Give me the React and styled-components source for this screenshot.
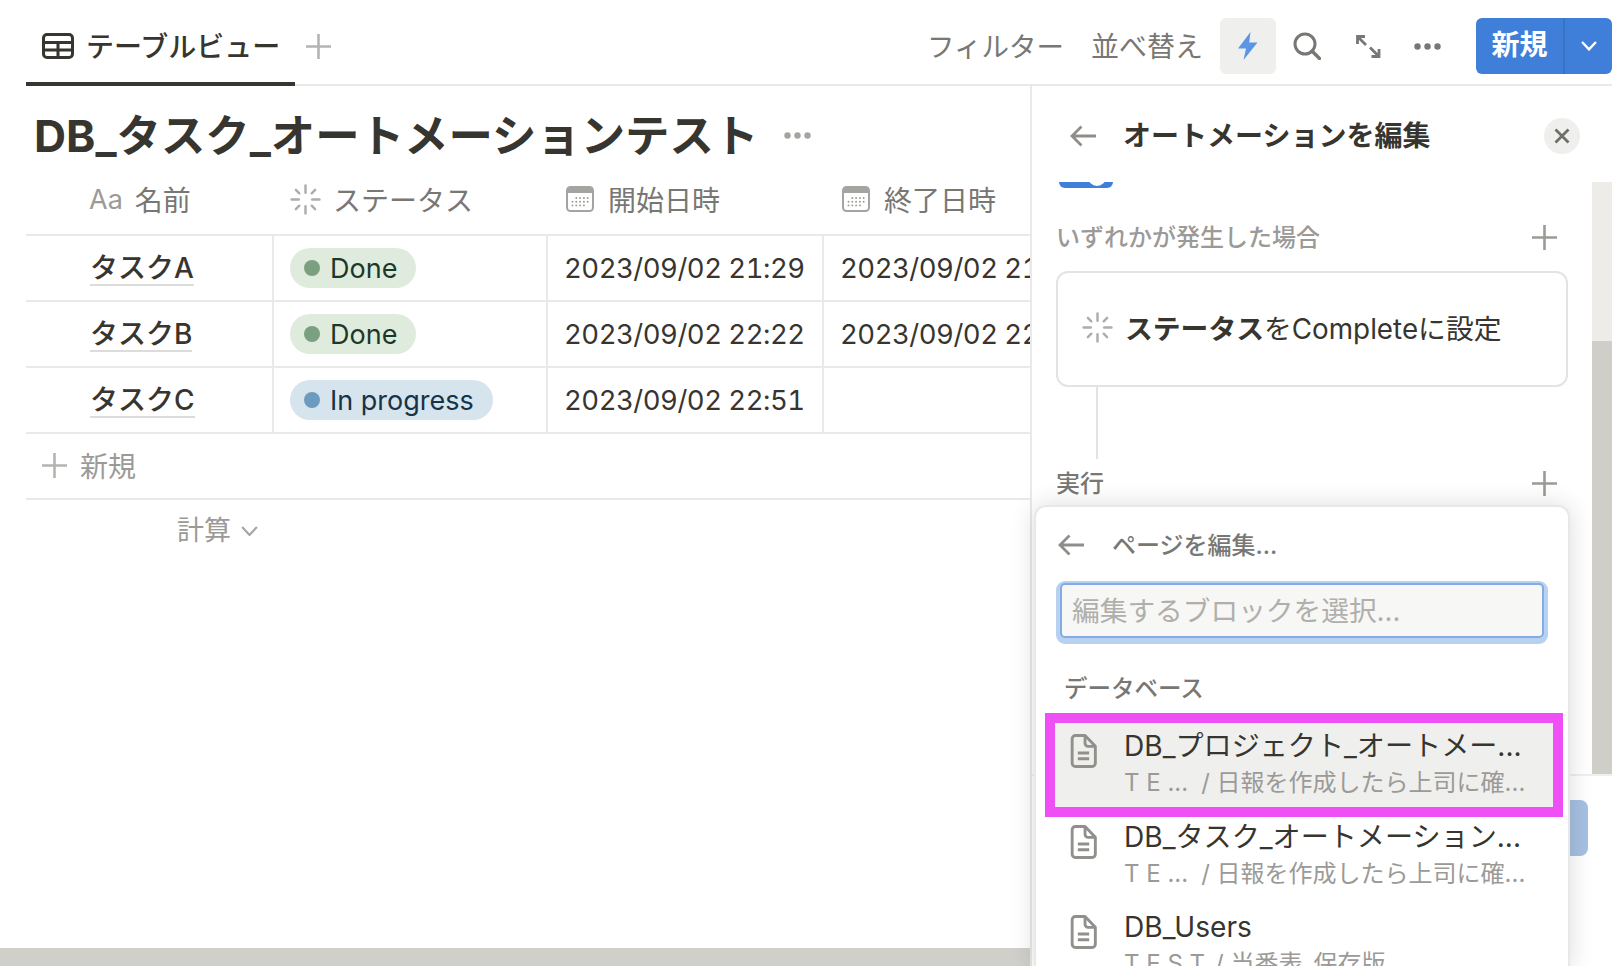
import React from "react";
import styled, { createGlobalStyle } from "styled-components";

const Global = createGlobalStyle`
  html, body { margin: 0; padding: 0; background: #fff; }
  body { font-family: Inter, "Noto Sans CJK JP", sans-serif; color: #37352f; font-size: 28px; }
  * { box-sizing: border-box; }
`;

const Page = styled.div`
  width: 1622px; height: 966px; overflow: hidden; display: flex; flex-direction: column; background: #fff;
`;
const TopBar = styled.header`
  height: 86px; margin: 0 10px 0 26px; border-bottom: 2px solid #e9e9e7;
  display: flex; justify-content: space-between; flex: none;
`;
const TabGroup = styled.div`display: flex; align-items: flex-start;`;
const Tab = styled.div`
  width: 269px; height: 86px; border-bottom: 4px solid #37352f; padding: 33px 0 0 16px;
  display: flex; align-items: flex-start; gap: 12px; font-size: 28px; line-height: 28px; font-weight: 500;
`;
const TabLabel = styled.span`letter-spacing: 0;`;
const TabAdd = styled.div`margin: 34px 0 0 11px; display: flex;`;
const Actions = styled.div`display: flex; align-items: flex-start; padding-top: 18px;`;
const ActionText = styled.div`
  height: 56px; line-height: 58px; font-size: ${p => p.$size}px; color: #787774; margin-right: ${p => p.$gap}px;
`;
const ActiveIcon = styled.div`
  width: 56px; height: 56px; border-radius: 6px; background: #efefee; display: flex; align-items: center; justify-content: center;
`;
const IconSlot = styled.div`
  height: 56px; display: flex; align-items: center; margin-left: ${p => p.$left}px;
`;
const NewButton = styled.div`
  margin-left: 35px; width: 136px; height: 56px; border-radius: 6px; background: #3f7fd9; color: #fff;
  display: flex; align-items: stretch;
`;
const NewLabel = styled.div`
  width: 89px; text-align: center; font-size: 28px; font-weight: 600; line-height: 55px; border-right: 2px solid #3873c6;
`;
const NewCaret = styled.div`flex: 1; display: flex; align-items: center; justify-content: center;`;

const Body = styled.div`flex: 1; display: flex; min-height: 0;`;
const Main = styled.main`width: 1030px; flex: none; display: flex; flex-direction: column; overflow: hidden;`;
const MainScroll = styled.div`flex: 1; padding-left: 26px; overflow: hidden;`;
const HScroll = styled.div`height: 18px; background: #d0cfca; flex: none;`;
const TitleRow = styled.div`
  height: 80px; padding: 20px 0 0 8px; display: flex; align-items: flex-start; gap: 26px;
`;
const Title = styled.h1`
  margin: 0; font-size: 44.4px; line-height: 60px; font-weight: 700; white-space: nowrap; color: #37352f;
`;
const TitleDots = styled.div`height: 60px; display: flex; align-items: center; margin-top: -1px;`;
const Row = styled.div`
  display: grid; grid-template-columns: 248px 274px 276px 207px; height: ${p => p.$h || 66}px; border-bottom: 2px solid #e9e9e7;
`;
const HeadCell = styled.div`
  display: flex; align-items: center; gap: ${p => p.$gap || 14}px; padding-left: ${p => p.$pad}px; color: #787774; font-size: 28px; white-space: nowrap; overflow: hidden; padding-bottom: 2px;
`;
const AaMark = styled.span`color: #9b9a97; font-size: 27px;`;
const NameCell = styled.div`
  border-right: 2px solid #e9e9e7; padding: 15px 0 0 64px; font-size: 28px; font-weight: 500;
`;
const NameLink = styled.span`
  display: inline-block; line-height: 31px; border-bottom: 2px solid #dcdcda;
`;
const Cell = styled.div`
  border-right: ${p => (p.$last ? "none" : "2px solid #e9e9e7")}; padding-left: ${p => p.$pad || 16}px;
  display: flex; align-items: center; overflow: hidden; white-space: nowrap; font-size: 27.5px;
  font-variant-numeric: tabular-nums; letter-spacing: -0.5px;
`;
const Pill = styled.div`
  height: 40px; border-radius: 20px; padding: 0 19px 0 14px; display: inline-flex; align-items: center; gap: 10px;
  background: ${p => p.$bg}; color: ${p => p.$fg}; font-size: 27px; letter-spacing: 0; font-variant-numeric: normal;
`;
const Dot = styled.i`width: 16px; height: 16px; border-radius: 50%; background: ${p => p.$c}; display: block;`;
const AddRow = styled.div`
  height: 66px; border-bottom: 2px solid #e9e9e7; display: flex; align-items: center; gap: 13px; padding: 0 0 2px 16px; color: #9b9a97; font-size: 28px;
`;
const CalcRow = styled.div`
  display: flex; align-items: center; gap: 10px; padding: 13px 0 0 151px; color: #9b9a97; font-size: 27px; line-height: 36px;
`;

const Panel = styled.aside`
  flex: none; width: 582px; border-left: 2px solid #e9e9e7; position: relative; display: flex; flex-direction: column;
`;
const PanelHead = styled.div`
  height: 96px; flex: none; display: flex; align-items: flex-start; padding: 33px 0 0 38px;
`;
const PanelTitle = styled.div`
  font-size: 28px; font-weight: 700; line-height: 34px; margin-left: 27px; white-space: nowrap; flex: 1;
`;
const BackWrap = styled.div`height: 34px; display: flex; align-items: center;`;
const CloseBtn = styled.div`
  width: 36px; height: 36px; border-radius: 50%; background: #efefee; display: flex; align-items: center; justify-content: center; margin: -1px 32px 0 0;
`;
const PanelMiddle = styled.div`flex: 1; display: flex; min-height: 0;`;
const PanelScroll = styled.div`flex: 1; overflow: hidden; padding: 0 24px 0 24px;`;
const Toggle = styled.div`
  width: 54px; height: 6px; margin-left: 3px; background: #3f7fd9; border-radius: 0 0 27px 27px; position: relative; overflow: hidden;
`;
const ToggleKnob = styled.i`
  position: absolute; right: 7px; top: -14px; width: 18px; height: 18px; border-radius: 50%; background: #fff; display: block;
`;
const SectionHead = styled.div`
  display: flex; align-items: center; justify-content: space-between; padding-right: 11px; height: 36px; margin-top: ${p => p.$top}px; font-size: 24px; font-weight: 500; color: ${p => p.$c};
`;
const SectionLabel = styled.span`padding-bottom: 4px;`;
const TriggerCard = styled.div`
  margin-top: 16px; height: 116px; border: 2px solid #e3e3e1; border-radius: 12px; display: flex; align-items: center; gap: 12px; padding: 0 0 4px 24px; font-size: 27.8px; white-space: nowrap;
`;
const Strong = styled.b`font-weight: 700;`;
const Connector = styled.div`width: 2px; height: 72px; background: #e3e3e1; margin-left: 40px;`;
const VScroll = styled.div`
  width: 20px; flex: none; background: #edece9; padding-top: 159px; display: flex;
`;
const VThumb = styled.div`flex: 1; background: #cfcec9;`;
const Footer = styled.div`
  height: 192px; flex: none; border-top: 2px solid #efefee; padding: 24px 24px 0 0; display: flex; justify-content: flex-end;
`;
const RunButton = styled.div`width: 200px; height: 56px; border-radius: 8px; background: #a6c0e2;`;

const Popup = styled.div`
  position: absolute; left: 2px; top: 419px; width: 536px; bottom: -4px; background: #fff; border: 2px solid #e8e8e6; border-bottom: none; border-radius: 12px 12px 0 0;
  box-shadow: 0 0 24px rgba(15, 15, 15, 0.14); z-index: 2;
`;
const PopHead = styled.div`
  height: 76px; display: flex; align-items: center; gap: 28px; padding: 0 0 0 22px; color: #787774; font-size: 24px; font-weight: 500;
`;
const PopHeadLabel = styled.span`padding-bottom: 4px;`;
const SearchInput = styled.input`
  display: block; margin-left: 24px; width: 484px; height: 55px; background: #f7f7f5; border: 2px solid #83ace6; border-radius: 5px;
  box-shadow: 0 2px 0 4px #b8d1f1; padding: 0 0 0 10px; font: 400 27.7px Inter, "Noto Sans CJK JP", sans-serif; color: #37352f; outline: none;
  &::placeholder { color: #b0afac; opacity: 1; }
`;
const GroupLabel = styled.div`
  margin: 34px 0 0 28px; line-height: 34px; height: 47px; font-size: 23.5px; font-weight: 500; color: #787774;
`;
const Item = styled.div`
  position: relative; height: 90.5px; margin: 0 9px; padding: 0 0 0 25px; display: flex; gap: 27px;
  background: ${p => (p.$mark ? "#efefee" : "transparent")};
  &::after {
    content: ${p => (p.$mark ? '""' : "none")}; position: absolute; left: 0; right: -4px; top: -6px; bottom: -7px; border: 10px solid #ee50f5; pointer-events: none;
  }
`;
const ItemIcon = styled.div`padding-top: 15px; flex: none;`;
const ItemText = styled.div`min-width: 0; padding-top: 7px; white-space: nowrap;`;
const ItemTitle = styled.div`font-size: 28.1px; line-height: 40px;`;
const ItemSub = styled.div`font-size: 24px; line-height: 36px; color: #9b9a97; margin-top: -1px;`;
const Crumb = styled.span`margin-right: ${p => p.$gap}px;`;

const Plus = ({ size = 25, color = "#9b9a97" }) => (
  <svg width={size} height={size} viewBox="0 0 25 25" fill="none" stroke={color} strokeWidth="2.6">
    <path d="M12.5 0v25M0 12.5h25" />
  </svg>
);
const TableIcon = () => (
  <svg width="32" height="26" viewBox="0 0 32 26" fill="none" stroke="#37352f" strokeWidth="3">
    <rect x="1.5" y="1.5" width="29" height="23" rx="3.5" />
    <path d="M2 9.5h28M2 17h28M16 9.5v15" />
  </svg>
);
const Bolt = () => (
  <svg width="20" height="28" viewBox="0 0 20 28" fill="#5a95e6">
    <path d="M12.5 0L0 16.5h8L5.5 28 19.5 10.5h-8.3L12.5 0z" />
  </svg>
);
const SearchIcon = () => (
  <svg width="28" height="28" viewBox="0 0 28 28" fill="none" stroke="#787774" strokeWidth="3">
    <circle cx="12" cy="12" r="10" />
    <path d="M19 19l7.5 7.5" strokeLinecap="round" strokeWidth="3.4" />
  </svg>
);
const ExpandIcon = () => (
  <svg width="26" height="25" viewBox="0 0 26 25" fill="none" stroke="#787774" strokeWidth="2.8">
    <path d="M2.5 10V2.5H10M2.5 2.5l8.5 8.5M24 15v7.5h-7.5M24 22.5l-9-9" />
  </svg>
);
const Dots = ({ color = "#787774", w = 27 }) => (
  <svg width={w} height="7" viewBox="0 0 27 7" fill={color}>
    <circle cx="3.5" cy="3.5" r="3.2" /><circle cx="13.5" cy="3.5" r="3.2" /><circle cx="23.5" cy="3.5" r="3.2" />
  </svg>
);
const Caret = ({ w = 16, color = "#fff", sw = 2.4 }) => (
  <svg width={w} height={w * 0.62} viewBox="0 0 16 10" fill="none" stroke={color} strokeWidth={sw}>
    <path d="M1 1l7 7.5L15 1" />
  </svg>
);
const Spinner = ({ size = 31 }) => (
  <svg width={size} height={size} viewBox="0 0 30 30" fill="none" stroke="#aeadaa" strokeWidth="2.4" strokeLinecap="round">
    <path d="M15 1.5v7M15 21.5v7M1.5 15h7M21.5 15h7" />
    <path d="M5.7 5.7l3.3 3.3M21 21l3.3 3.3M5.7 24.3L9 21M21 9l3.3-3.3" />
  </svg>
);
const CalendarIcon = () => {
  const dots = [];
  for (let r = 0; r < 3; r++) for (let c = 0; c < 5; c++) {
    if (r === 0 && c === 0) continue;
    if (r === 2 && c === 4) continue;
    dots.push(<circle key={`${r}${c}`} cx={6.5 + c * 3.8} cy={12 + r * 3.7} r="0.95" fill="#9b9a97" />);
  }
  return (
    <svg width="28" height="26" viewBox="0 0 28 26" fill="none">
      <rect x="1" y="1" width="26" height="24" rx="3.5" fill="#fff" stroke="#a5a4a1" strokeWidth="2" />
      <path d="M1 7V4.5A3.5 3.5 0 0 1 4.5 1h19A3.5 3.5 0 0 1 27 4.5V7z" fill="#a5a4a1" />
      {dots}
    </svg>
  );
};
const ArrowLeft = () => (
  <svg width="26" height="22" viewBox="0 0 26 22" fill="none" stroke="#8f8e8b" strokeWidth="2.8">
    <path d="M26 11H2M11.5 1.5L2 11l9.5 9.5" />
  </svg>
);
const CloseIcon = () => (
  <svg width="16" height="16" viewBox="0 0 16 16" fill="none" stroke="#6f6e69" strokeWidth="2.8">
    <path d="M1.5 1.5l13 13M14.5 1.5l-13 13" />
  </svg>
);
const DocIcon = () => (
  <svg width="27" height="34" viewBox="0 0 26 33" fill="none" stroke="#91908d" strokeWidth="2.8">
    <path d="M5 1.5h9.5L24.5 12v16.5a3 3 0 0 1-3 3H5a3 3 0 0 1-3-3v-24a3 3 0 0 1 3-3z" strokeLinejoin="round" />
    <path d="M14.5 1.5V9a3 3 0 0 0 3 3h7" />
    <path d="M7.5 18.5h11M7.5 24h11" />
  </svg>
);

const tasks = [
  { name: "タスクA", status: "Done", start: "2023/09/02 21:29", end: "2023/09/02 21:40" },
  { name: "タスクB", status: "Done", start: "2023/09/02 22:22", end: "2023/09/02 22:30" },
  { name: "タスクC", status: "In progress", start: "2023/09/02 22:51", end: "" },
];
const pillStyles = {
  Done: { bg: "#dfecdd", fg: "#1c3829", dot: "#7b9f81" },
  "In progress": { bg: "#d6e4ee", fg: "#183347", dot: "#6c9bbf" },
};
const results = [
  { title: "DB_プロジェクト_オートメー...", crumb: "T E ...", path: "/ 日報を作成したら上司に確...", mark: true, gap: 13 },
  { title: "DB_タスク_オートメーション...", crumb: "T E ...", path: "/ 日報を作成したら上司に確...", gap: 13 },
  { title: "DB_Users", crumb: "T E S T", path: "/ 当番表_保存版", gap: 10 },
];

export default function App() {
  return (
    <Page>
      <Global />
      <TopBar>
        <TabGroup>
          <Tab><TableIcon /><TabLabel>テーブルビュー</TabLabel></Tab>
          <TabAdd><Plus color="#b5b4b1" /></TabAdd>
        </TabGroup>
        <Actions>
          <ActionText $size={27.5} $gap={27}>フィルター</ActionText>
          <ActionText $size={28} $gap={17}>並べ替え</ActionText>
          <ActiveIcon><Bolt /></ActiveIcon>
          <IconSlot $left={17}><SearchIcon /></IconSlot>
          <IconSlot $left={34}><ExpandIcon /></IconSlot>
          <IconSlot $left={33}><Dots /></IconSlot>
          <NewButton>
            <NewLabel>新規</NewLabel>
            <NewCaret><Caret /></NewCaret>
          </NewButton>
        </Actions>
      </TopBar>
      <Body>
        <Main>
          <MainScroll>
            <TitleRow>
              <Title>DB_タスク_オートメーションテスト</Title>
              <TitleDots><Dots color="#a5a4a1" /></TitleDots>
            </TitleRow>
            <Row $h={70}>
              <HeadCell $pad={63} $gap={12}><AaMark>Aa</AaMark>名前</HeadCell>
              <HeadCell $pad={16} $gap={12}><Spinner />ステータス</HeadCell>
              <HeadCell $pad={18}><CalendarIcon />開始日時</HeadCell>
              <HeadCell $pad={18}><CalendarIcon />終了日時</HeadCell>
            </Row>
            {tasks.map(t => {
              const s = pillStyles[t.status];
              return (
                <Row key={t.name}>
                  <NameCell><NameLink>{t.name}</NameLink></NameCell>
                  <Cell $pad={16}>
                    <Pill $bg={s.bg} $fg={s.fg}><Dot $c={s.dot} />{t.status}</Pill>
                  </Cell>
                  <Cell>{t.start}</Cell>
                  <Cell $last>{t.end}</Cell>
                </Row>
              );
            })}
            <AddRow><Plus color="#b5b4b1" />新規</AddRow>
            <CalcRow>計算<Caret w={17} color="#a5a4a1" sw={2} /></CalcRow>
          </MainScroll>
          <HScroll />
        </Main>
        <Panel>
          <PanelHead>
            <BackWrap><ArrowLeft /></BackWrap>
            <PanelTitle>オートメーションを編集</PanelTitle>
            <CloseBtn><CloseIcon /></CloseBtn>
          </PanelHead>
          <PanelMiddle>
            <PanelScroll>
              <Toggle><ToggleKnob /></Toggle>
              <SectionHead $top={31} $c="#9b9a97"><SectionLabel>いずれかが発生した場合</SectionLabel><Plus /></SectionHead>
              <TriggerCard>
                <Spinner />
                <span><Strong>ステータス</Strong>をCompleteに設定</span>
              </TriggerCard>
              <Connector />
              <SectionHead $top={6} $c="#787774"><SectionLabel>実行</SectionLabel><Plus /></SectionHead>
            </PanelScroll>
            <VScroll><VThumb /></VScroll>
          </PanelMiddle>
          <Footer><RunButton /></Footer>
          <Popup>
            <PopHead><ArrowLeft /><PopHeadLabel>ページを編集...</PopHeadLabel></PopHead>
            <SearchInput placeholder="編集するブロックを選択..." readOnly />
            <GroupLabel>データベース</GroupLabel>
            {results.map(r => (
              <Item key={r.title} $mark={r.mark}>
                <ItemIcon><DocIcon /></ItemIcon>
                <ItemText>
                  <ItemTitle>{r.title}</ItemTitle>
                  <ItemSub><Crumb $gap={r.gap}>{r.crumb}</Crumb>{r.path}</ItemSub>
                </ItemText>
              </Item>
            ))}
          </Popup>
        </Panel>
      </Body>
    </Page>
  );
}
